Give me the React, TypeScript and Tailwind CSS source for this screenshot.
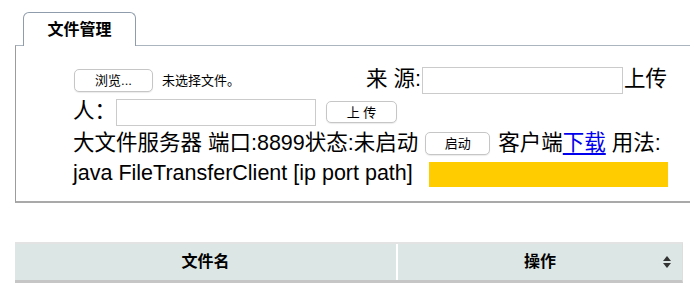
import React from "react";

const btn =
  "flex items-center justify-center bg-white border border-[#c6c6c6] rounded-[5px] shadow-[0_1px_1px_rgba(0,0,0,0.08)] text-[13px] leading-none text-black";

export default function App() {
  return (
    <div className="w-[694px] h-[292px] overflow-hidden bg-white text-black font-['Liberation_Sans','Noto_Sans_CJK_SC',sans-serif]">
      <div className="pt-[12px] pl-[15px]">
        {/* Tab */}
        <div className="relative z-10 ml-[8px] -mb-px w-[113px] h-[34px] border border-b-0 border-[#8f9cab] rounded-t-[6px] bg-white flex items-center justify-center font-bold text-[16px]">
          文件管理
        </div>
        {/* Panel */}
        <div className="w-[675px] h-[158px] border-t border-t-[#aab5c0] border-l border-l-[#9c9c9c] border-b-2 border-b-[#a9a9a9] pt-[18px] pl-[57px] text-[21.5px] leading-none whitespace-nowrap">
          {/* Row 1 */}
          <div className="flex items-center h-[32px]">
            <div className="w-[293px] flex items-center">
              <div className={`${btn} ml-[1px] w-[79px] h-[23px]`}>浏览...</div>
              <span className="ml-[9px] text-[13px]">未选择文件。</span>
            </div>
            <span>来 源:</span>
            <div className="ml-[1px] w-[201px] h-[27px] border border-[#cbcbcb] bg-white" />
            <span className="ml-[1px]">上传</span>
          </div>
          {/* Row 2 */}
          <div className="flex items-center h-[32px]">
            <span>人：</span>
            <div className="w-[200px] h-[27px] border border-[#cbcbcb] bg-white" />
            <div className={`${btn} ml-[10px] w-[71px] h-[22px]`}>上 传</div>
          </div>
          {/* Row 3 */}
          <div className="flex items-center h-[31px]">
            <span>大文件服务器 端口:8899状态:未启动</span>
            <div className={`${btn} ml-[7px] w-[65px] h-[23px]`}>启动</div>
            <span className="ml-[8px]">客户端</span>
            <a className="text-[#0000ee] underline underline-offset-[3px]" href="#">
              下载
            </a>
            <span>&nbsp;用法:</span>
          </div>
          {/* Row 4 */}
          <div className="flex items-center h-[30px]">
            <span>java FileTransferClient [ip port path]</span>
            <div className="ml-[16px] w-[239px] h-[25px] bg-[#ffcc00]" />
          </div>
        </div>
        {/* Table header */}
        <div className="mt-[39px] w-[668px] flex border-t-2 border-t-[#e3e3e3] border-b-[3px] border-b-[#c6c6c6] border-r border-r-[#dddddd] bg-[#dce6e5] h-[41px] text-[16px] font-bold">
          <div className="w-[381px] flex items-center justify-center">文件名</div>
          <div className="w-[2px] bg-white" />
          <div className="relative flex-1 flex items-center justify-center">
            操作
            <svg
              className="absolute right-[11px] top-1/2 -translate-y-1/2"
              width="8"
              height="12"
              viewBox="0 0 8 12"
            >
              <polygon points="0,5 4,0 8,5" fill="#333" />
              <polygon points="0,7 4,12 8,7" fill="#333" />
            </svg>
          </div>
        </div>
      </div>
    </div>
  );
}
